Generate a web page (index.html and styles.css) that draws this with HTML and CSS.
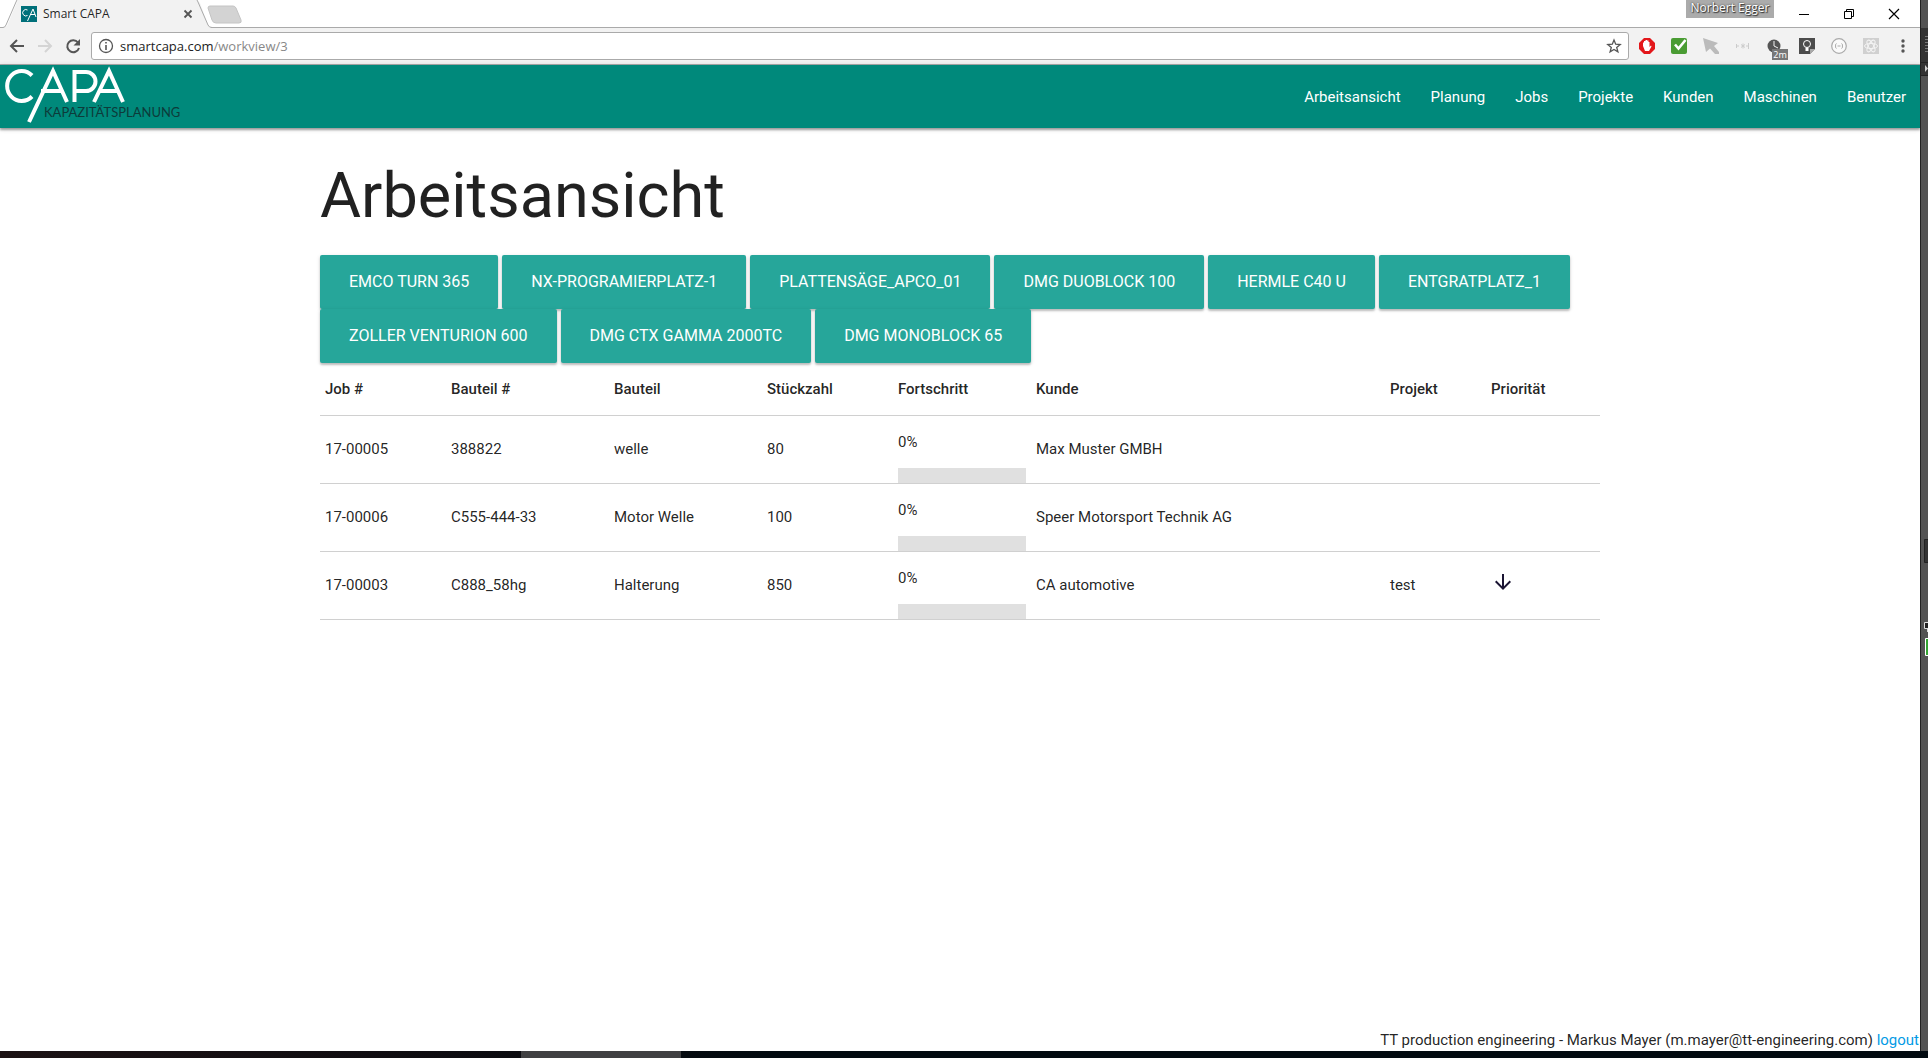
FILE: index.html
```html
<!DOCTYPE html>
<html lang="de">
<head>
<meta charset="utf-8">
<title>Smart CAPA</title>
<link rel="stylesheet" href="styles.css">
</head>
<body>
<div class="desktop">
  <div class="window">
    <div class="tabstrip">
      <svg class="tab-shape" width="252" height="28" viewBox="0 0 252 28" aria-hidden="true">
        <path d="M0 27.500H3L7 26 17 2 18 0H197L200 3 208 25 211 27.500V28H0Z" fill="#f2f2f2"/>
        <path d="M0 27.500H3Q5 27.500 6 25L16 2 17 0M197 0 198 2 208 25Q209 27.500 212 27.500H252" fill="none" stroke="#aaa"/>
        <path d="M208 8Q208 6 210 6H233Q235 6 236 8L241 20Q242 23 239 23H216Q213 23 212 20Z" fill="#d3d3d3" stroke="#c4c4c4"/>
      </svg>
      <div class="tab">
        <svg width="16" height="16" viewBox="0 0 16 16" aria-hidden="true">
          <path fill="#00707a" d="M0 0H16V16H0Z"/>
          <path d="M6.500 4A3.200 3.200 0 1 0 6.500 9.500M6.500 15 12 3 15 11M9.500 8.500H14" fill="none" stroke="#fff"/>
        </svg>
        <span class="tab-title">Smart CAPA</span>
        <button class="bare" aria-label="Tab schließen"><svg width="10" height="10" viewBox="0 0 10 10"><path d="M1.500 1.500 8.500 8.500M8.500 1.500 1.500 8.500" stroke="#555" stroke-width="1.800"/></svg></button>
      </div>
      <div class="window-controls">
        <span class="profile">Norbert Egger</span>
        <button class="bare win" aria-label="Minimieren"><svg width="12" height="12" viewBox="0 0 12 12"><path d="M1 6.500H11" stroke="#000"/></svg></button>
        <button class="bare win" aria-label="Verkleinern"><svg width="12" height="12" viewBox="0 0 12 12"><path d="M1.500 3.500H8.500V10.500H1.500ZM3.500 3V1.500H10.500V8.500H9" fill="none" stroke="#000"/></svg></button>
        <button class="bare win" aria-label="Schließen"><svg width="12" height="12" viewBox="0 0 12 12"><path d="M1 1 11 11M11 1 1 11" stroke="#000" stroke-width="1.200"/></svg></button>
      </div>
    </div>
    <div class="toolbar">
      <div class="history">
        <button class="bare" aria-label="Zurück"><svg width="16" height="16" viewBox="0 0 16 16"><path d="M15 8H2M8 2 2 8 8 14" fill="none" stroke="#555" stroke-width="2"/></svg></button>
        <button class="bare" aria-label="Vor"><svg width="16" height="16" viewBox="0 0 16 16"><path d="M1 8H14M8 2 14 8 8 14" fill="none" stroke="#d4d4d4" stroke-width="2"/></svg></button>
        <button class="bare" aria-label="Neu laden"><svg width="16" height="16" viewBox="0 0 16 16"><path d="M13 4.500A6 6 0 1 0 14 10" fill="none" stroke="#555" stroke-width="2"/><path d="M15 1V7.500H8.500Z" fill="#555"/></svg></button>
      </div>
      <div class="address">
        <svg width="16" height="16" viewBox="0 0 16 16" aria-hidden="true"><circle cx="8" cy="8" r="6.500" fill="none" stroke="#555" stroke-width="1.300"/><path d="M7.200 4H8.800V5.600H7.200ZM7.200 7H8.800V12H7.200Z" fill="#555"/></svg>
        <span class="url">smartcapa.com<span class="path">/workview/3</span></span>
        <button class="bare" aria-label="Lesezeichen"><svg width="16" height="16" viewBox="0 0 16 16"><path d="M8 2 9.700 6.200 14.200 6.500 10.700 9.400 11.900 13.800 8 11.400 4.100 13.800 5.300 9.400 1.800 6.500 6.300 6.200Z" fill="none" stroke="#555" stroke-width="1.300"/></svg></button>
      </div>
      <div class="extensions">
        <svg width="16" height="16" viewBox="0 0 16 16"><path d="M5 0H11L16 5V11L11 16H5L0 11V5Z" fill="#e3171b"/><path d="M4 8V4.500H5V3H6.500V2H8V2.500H9.500V4H10.500V9L12 7.500 12.500 8.500 10 13H6Z" fill="#fff"/></svg>
        <svg width="16" height="16" viewBox="0 0 16 16"><rect width="16" height="16" rx="2" fill="#4a9c33"/><path d="M4 6.500 7.500 10.500 14.500 2" fill="none" stroke="#fff" stroke-width="2.600"/></svg>
        <svg width="16" height="16" viewBox="0 0 16 16"><path d="M0 0 15 5 11 8 16 14V16H12L7 10.500 3 14Z" fill="#bbb"/></svg>
        <svg width="16" height="16" viewBox="0 0 16 16"><path d="M1.500 6V10M1.500 8H4M13.500 5V11M11 8H13M8 5.500V10.500M6 6.500 10 9.500M10 6.500 6 9.500" stroke="#ccc"/></svg>
        <span class="timer"><svg width="16" height="16" viewBox="0 0 16 16"><circle cx="7" cy="8" r="6.500" fill="#555"/><path d="M7 3V8L11 10" fill="none" stroke="#f2f2f2"/></svg><span class="badge">2m</span></span>
        <svg width="16" height="16" viewBox="0 0 16 16"><path d="M0 0H16V11L11 16H0Z" fill="#4c4c4c"/><path d="M11 16V11H16Z" fill="#aaa"/><circle cx="8" cy="6" r="3.500" fill="none" stroke="#fff"/><path d="M6.500 9.500H9.500V13H6.500Z" fill="#fff"/></svg>
        <svg width="16" height="16" viewBox="0 0 16 16"><circle cx="8" cy="8" r="7.300" fill="#fafafa" stroke="#aaa" stroke-width="1.200"/><path d="M5.500 5.500Q4.500 5.500 4.500 8T5.500 10.500M10.500 5.500Q11.500 5.500 11.500 8T10.500 10.500M6.500 8H9.500" fill="none" stroke="#aaa"/></svg>
        <svg width="16" height="16" viewBox="0 0 16 16"><path d="M0 0H16V16H0Z" fill="#d0d0d0"/><g fill="none" stroke="#f4f4f4"><ellipse cx="8" cy="8" rx="6.500" ry="2.600"/><ellipse cx="8" cy="8" rx="6.500" ry="2.600" transform="rotate(60 8 8)"/><ellipse cx="8" cy="8" rx="6.500" ry="2.600" transform="rotate(120 8 8)"/></g></svg>
        <button class="bare" aria-label="Menü"><svg width="16" height="16" viewBox="0 0 16 16"><g fill="#555"><circle cx="8" cy="3" r="1.700"/><circle cx="8" cy="8" r="1.700"/><circle cx="8" cy="13" r="1.700"/></g></svg></button>
      </div>
    </div>

    <div class="page">
      <header class="nav">
        <a class="logo" href="#" aria-label="CAPA Kapazitätsplanung">
          <svg width="184" height="63" viewBox="0 0 184 63">
            <g fill="none" stroke="#fff" stroke-width="4">
              <path d="M32 10.500A14.500 15 0 1 0 32 31.500"/>
              <path d="M29 57 53 6 67 37M41 26H62"/>
              <path d="M74.500 37V7H86A9.500 9.500 0 0 1 86 26H75"/>
              <path d="M94 37 109 6 123 37M99 26H119"/>
            </g>
            <text class="logo-sub" x="44" y="52">KAPAZITÄTSPLANUNG</text>
          </svg>
        </a>
        <nav class="links">
          <a href="#">Arbeitsansicht</a>
          <a href="#">Planung</a>
          <a href="#">Jobs</a>
          <a href="#">Projekte</a>
          <a href="#">Kunden</a>
          <a href="#">Maschinen</a>
          <a href="#">Benutzer</a>
        </nav>
      </header>

      <main class="container">
        <h1>Arbeitsansicht</h1>
        <div class="machines">
          <button class="btn">EMCO TURN 365</button>
          <button class="btn">NX-PROGRAMIERPLATZ-1</button>
          <button class="btn">PLATTENSÄGE_APCO_01</button>
          <button class="btn">DMG DUOBLOCK 100</button>
          <button class="btn">HERMLE C40 U</button>
          <button class="btn">ENTGRATPLATZ_1</button>
          <button class="btn">ZOLLER VENTURION 600</button>
          <button class="btn">DMG CTX GAMMA 2000TC</button>
          <button class="btn">DMG MONOBLOCK 65</button>
        </div>
        <table class="jobs">
          <colgroup>
            <col class="c-job"><col class="c-part"><col class="c-name"><col class="c-count"><col class="c-progress"><col><col class="c-project"><col class="c-priority">
          </colgroup>
          <thead>
            <tr><th>Job #</th><th>Bauteil #</th><th>Bauteil</th><th>Stückzahl</th><th>Fortschritt</th><th>Kunde</th><th>Projekt</th><th>Priorität</th></tr>
          </thead>
          <tbody>
            <tr><td>17-00005</td><td>388822</td><td>welle</td><td>80</td><td class="progress">0%<div class="bar"></div></td><td>Max Muster GMBH</td><td></td><td></td></tr>
            <tr><td>17-00006</td><td>C555-444-33</td><td>Motor Welle</td><td>100</td><td class="progress">0%<div class="bar"></div></td><td>Speer Motorsport Technik AG</td><td></td><td></td></tr>
            <tr><td>17-00003</td><td>C888_58hg</td><td>Halterung</td><td>850</td><td class="progress">0%<div class="bar"></div></td><td>CA automotive</td><td>test</td><td class="priority"><svg width="24" height="24" viewBox="0 0 24 24" role="img" aria-label="niedrig"><path fill="#1a1433" d="M20 12l-1.410-1.410L13 16.170V4h-2v12.170l-5.580-5.590L4 12l8 8 8-8z"/></svg></td></tr>
          </tbody>
        </table>
      </main>

      <footer class="footer">TT production engineering - Markus Mayer (m.mayer@tt-engineering.com) <a href="#">logout</a></footer>
    </div>
  </div>

  <div class="side" aria-hidden="true">
    <svg width="7" height="680" viewBox="0 0 7 680">
      <path d="M0 28H7V75H0Z" fill="#333"/>
      <path d="M4 36.500H7M4 39.500H7M4 42.500H7M4 45.500H7M4 48.500H7M4 51.500H7" stroke="#777"/>
      <path d="M0 62.500H7M0 75.500H7" stroke="#222"/>
      <path d="M4 65 7 68.500 4 72Z" fill="#ccc"/>
      <path d="M8 539.500H3.500V562.500H8" fill="#333" stroke="#222"/>
      <path d="M8 622.500H3.500V628.500H8M6.500 629V632" fill="#222" stroke="#ddd"/>
      <path d="M8 638.500H4.500V655.500H8" fill="#33a532" stroke="#fff"/>
    </svg>
  </div>
  <div class="taskbar" aria-hidden="true"><div class="task"></div></div>
</div>
</body>
</html>
```
FILE: styles.css
```css
* { box-sizing: border-box; }

body {
  margin: 0;
  font: 15px/22px Roboto, sans-serif;
  color: rgba(0, 0, 0, 0.87);
}

a { text-decoration: none; color: #039be5; }

.bare {
  display: flex;
  align-items: center;
  justify-content: center;
  padding: 0;
  border: 0;
  background: none;
}

svg { display: block; flex: none; }

.desktop {
  display: grid;
  grid-template: 1fr 7px / 1fr 8px;
  min-height: 100vh;
}

.window {
  display: flex;
  flex-direction: column;
  min-width: 0;
  background: #fff;
}

/* Browser frame */
.tabstrip {
  position: relative;
  display: flex;
  justify-content: space-between;
  height: 28px;
  border-bottom: 1px solid #aaa;
  font: 12px/16px "Open Sans", sans-serif;
}

.tab-shape { position: absolute; left: 0; top: 0; }

.tab {
  position: relative;
  display: flex;
  align-items: center;
  gap: 6px;
  width: 193px;
  padding-left: 21px;
}

.tab-title { flex: 1; }

.window-controls { display: flex; padding-right: 4px; }

.profile {
  width: 88px;
  height: 18px;
  margin-right: 7px;
  background: #ababab;
  color: #fff;
  text-align: center;
  text-shadow: 0 0 2px #333, 1px 1px 1px #333;
}

.win { width: 45px; height: 27px; }

.toolbar {
  display: flex;
  align-items: center;
  height: 37px;
  border-bottom: 1px solid #aaa;
  background: #f2f2f2;
}

.history {
  display: flex;
  gap: 12px;
  padding: 0 10px 0 9px;
}

.address {
  display: flex;
  flex: 1;
  align-items: center;
  gap: 6px;
  height: 28px;
  padding: 0 6px;
  border: 1px solid #aaa;
  border-radius: 3px;
  background: #fff;
}

.url { flex: 1; font: 13px/20px "Open Sans", sans-serif; color: #222; }
.path { color: #888; }

.extensions {
  display: flex;
  gap: 16px;
  padding: 0 9px 0 10px;
}

.timer { position: relative; }

.badge {
  position: absolute;
  left: 5px;
  top: 11px;
  width: 16px;
  background: #777;
  color: #fff;
  font: 9px/11px "Open Sans", sans-serif;
  text-align: center;
}

/* Page */
.page {
  display: flex;
  flex: 1;
  flex-direction: column;
}

.nav {
  display: flex;
  justify-content: space-between;
  height: 63px;
  background: #00897b;
  box-shadow: 0 2px 2px rgba(0, 0, 0, 0.3), 0 1px 5px rgba(0, 0, 0, 0.2);
}

.logo-sub { font: 13px Lato, sans-serif; fill: #0d3b3a; }

.links { display: flex; padding-right: 14px; gap: 30px; }

.links a {
  line-height: 64px;
  color: #fff;
}

.container {
  flex: 1;
  width: 100%;
  max-width: 1280px;
  margin: 0 auto;
}

h1 {
  margin: 33px 0 25px;
  font-size: 63px;
  font-weight: 400;
  line-height: 69px;
}

.machines {
  display: flex;
  flex-wrap: wrap;
  gap: 0 4px;
}

.btn {
  height: 54px;
  padding: 0 29px;
  border: 0;
  border-radius: 2px;
  background: #26a69a;
  box-shadow: 0 2px 2px rgba(0, 0, 0, 0.2), 0 1px 4px rgba(0, 0, 0, 0.12);
  color: #fff;
  font: 16px/54px Roboto, sans-serif;
}

.jobs {
  width: 100%;
  table-layout: fixed;
  border-collapse: separate;
  border-spacing: 0;
}

.c-job { width: 126px; }
.c-part { width: 163px; }
.c-name { width: 153px; }
.c-count { width: 131px; }
.c-progress { width: 138px; }
.c-project { width: 101px; }
.c-priority { width: 114px; }

.jobs th, .jobs td {
  padding: 15px 5px;
  border-bottom: 1px solid #d0d0d0;
  text-align: left;
  vertical-align: middle;
}

.jobs th { font-weight: 500; }
.jobs td { padding-bottom: 17px; }
.jobs .progress { padding-bottom: 0; }
.jobs .priority { padding-bottom: 22px; }

.bar {
  height: 15px;
  margin-top: 15px;
  background: #e0e0e0;
}

.footer { padding-right: 1px; text-align: right; }

/* Desktop around the window */
.side {
  overflow: hidden;
  border-left: 1px solid #222;
  background: #535353;
}

.taskbar {
  grid-column: 1 / -1;
  display: flex;
  background: linear-gradient(90deg, #1c1214, #0b0b10 27%, #020a10 40%);
}

.task {
  width: 160px;
  margin-left: 27%;
  background: #404042;
}
```
